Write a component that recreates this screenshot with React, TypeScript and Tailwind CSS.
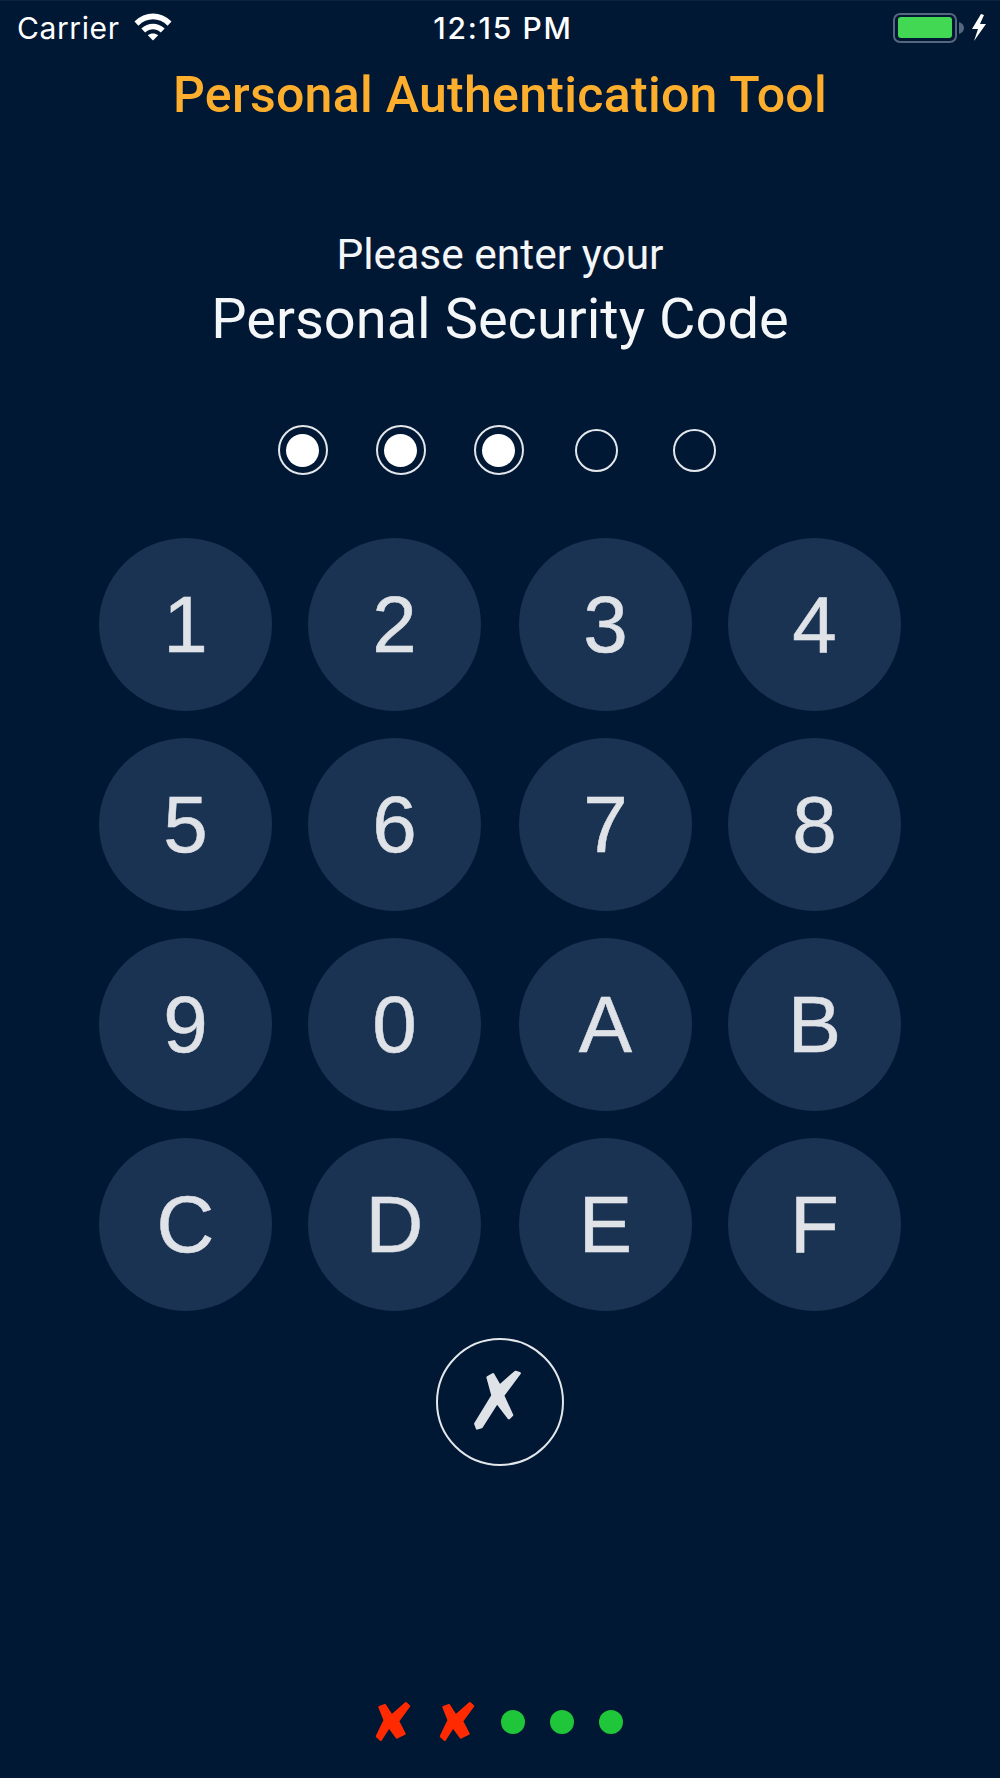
const keys = ["1","2","3","4","5","6","7","8","9","0","A","B","C","D","E","F"];

function Wifi() {
  return (
    <svg width="38" height="28" viewBox="0 0 38 28" fill="#ffffff" className="ml-[14px] -mt-[1px]">
      <path d="M0.5 8.5 C11 -2.2 27 -2.2 37.5 8.5 L33.6 12.7 C25 4.2 13 4.2 4.4 12.7 Z" />
      <path d="M7.3 15.5 C14 9 24 9 30.7 15.5 L26.8 19.6 C21.8 15.2 16.2 15.2 11.2 19.6 Z" />
      <path d="M13.8 22.3 C16.8 19.9 21.2 19.9 24.2 22.3 L19 27.6 Z" />
    </svg>
  );
}

function Battery() {
  return (
    <div className="flex items-center">
      <div className="flex h-[30px] w-[64px] items-center justify-center rounded-[7px] border-2 border-[#55667f]">
        <div className="h-[21px] w-[54px] rounded-[3px] bg-[#43d854]" />
      </div>
      <svg width="5" height="12" viewBox="0 0 5 12" className="ml-[2px]">
        <path d="M0 0 C3 1 5 3 5 6 C5 9 3 11 0 12 Z" fill="#55667f" />
      </svg>
      <svg width="16" height="27" viewBox="0 0 16 27" fill="#ffffff" className="ml-[7px]">
        <path d="M10 0 L1 15 L7 15 L3 27 L15 10 L9 10 L13 1 Z" />
      </svg>
    </div>
  );
}

function CodeDot({ filled }: { filled: boolean }) {
  return (
    <div className="flex w-[98px] justify-center">
      {filled ? (
        <div className="flex h-[50px] w-[50px] items-center justify-center rounded-full border-2 border-[#e3e6ea]">
          <div className="h-[33px] w-[33px] rounded-full bg-white" />
        </div>
      ) : (
        <div className="h-[43px] w-[43px] rounded-full border-2 border-[#e3e6ea]" />
      )}
    </div>
  );
}

function RedCross() {
  return (
    <svg width="38" height="43" viewBox="45 53 118 132" fill="#ff2a00" stroke="#ff2a00" strokeWidth="7" strokeLinejoin="round">
      <path d="M62 74 L79 68 L100 101 L144 62 L154 71 L120 118 L140 157 L116 169 L92 136 L66 176 L54 165 L78 115 Z" />
    </svg>
  );
}

export default function App() {
  return (
    <div
      className="flex h-[1778px] w-[1000px] flex-col items-center overflow-hidden border-t border-[#0c2340] bg-[#001834] text-white"
      style={{ fontFamily: "Roboto, sans-serif" }}
    >
      <div className="relative flex h-[53px] w-full shrink-0 items-center justify-between pl-[17px] pr-[13px]">
        <div className="flex items-center">
          <span className="text-[30px] leading-none tracking-[0.6px] font-['Inter',sans-serif]">Carrier</span>
          <Wifi />
        </div>
        <span className="absolute left-0 right-0 pl-[6px] text-center text-[30px] leading-none font-medium tracking-[1.7px] font-['Inter',sans-serif]">12:15 PM</span>
        <Battery />
      </div>

      <h1 className="mt-[14px] text-[50px] font-medium leading-[54px] tracking-[0.3px] text-[#feae2d]">
        Personal Authentication Tool
      </h1>

      <p className="mt-[108px] text-[42.5px] leading-[50px] text-[#f5f6f7]">Please enter your</p>
      <p className="mt-[7px] text-[56px] leading-[64px] text-[#f5f6f7]">Personal Security Code</p>

      <div className="mt-[74px] mr-[3px] flex h-[50px] items-center">
        <CodeDot filled />
        <CodeDot filled />
        <CodeDot filled />
        <CodeDot filled={false} />
        <CodeDot filled={false} />
      </div>

      <div className="mt-[63px] grid grid-cols-[173px_173px_175px_173px] justify-items-end gap-x-[36px] gap-y-[27px]">
        {keys.map((k) => (
          <div
            key={k}
            className="flex h-[173px] w-[173px] items-center justify-center rounded-full bg-[#1a3353] text-[80px] leading-none text-[#dfe2e7] [-webkit-text-stroke:0.5px_#dfe2e7] font-['Liberation_Sans',Arial,sans-serif]"
          >
            {k}
          </div>
        ))}
      </div>

      <div className="mt-[27px] flex h-[128px] w-[128px] items-center justify-center rounded-full border-2 border-[#e3e6ea]">
        <svg width="50" height="63" viewBox="160 145 150 190" fill="#dfe2e7" stroke="#dfe2e7" strokeWidth="8" strokeLinejoin="round" className="mr-[4px] mb-[3px]">
          <path d="M288 154 L300 158 L250 225 L277 284 L268 293 L232 246 L185 320 L172 324 L167 310 L219 225 L204 170 L220 161 L240 196 Z" />
        </svg>
      </div>

      <div className="mt-[234px] mr-[3px] flex h-[43px] items-center">
        <RedCross />
        <div className="ml-[26px]"><RedCross /></div>
        <div className="ml-[25px] h-[24px] w-[24px] rounded-full bg-[#1fc639]" />
        <div className="ml-[25px] h-[24px] w-[24px] rounded-full bg-[#1fc639]" />
        <div className="ml-[25px] h-[24px] w-[24px] rounded-full bg-[#1fc639]" />
      </div>
    </div>
  );
}
